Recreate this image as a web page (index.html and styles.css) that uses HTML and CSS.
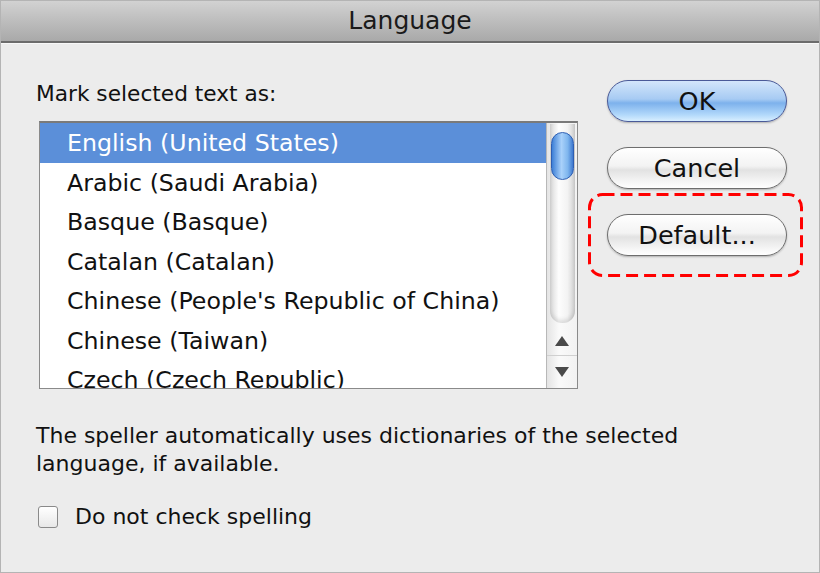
FILE: index.html
```html
<!DOCTYPE html>
<html>
<head>
  <meta charset="utf-8">
  <link rel="stylesheet" href="styles.css">
  <title>Language</title>
</head>
<body>
  <div class="dialog">
    <div class="titlebar">Language</div>
    <div class="main">
      <div class="left">
        <p class="label">Mark selected text as:</p>
        <div class="listbox">
          <ul class="items">
            <li class="selected">English (United States)</li>
            <li>Arabic (Saudi Arabia)</li>
            <li>Basque (Basque)</li>
            <li>Catalan (Catalan)</li>
            <li>Chinese (People's Republic of China)</li>
            <li>Chinese (Taiwan)</li>
            <li>Czech (Czech Republic)</li>
          </ul>
          <div class="scrollbar">
            <div class="track"><div class="thumb"></div></div>
            <div class="arrow up"><span></span></div>
            <div class="arrow down"><span></span></div>
          </div>
        </div>
      </div>
      <div class="buttons">
        <button class="btn ok">OK</button>
        <button class="btn">Cancel</button>
        <div class="highlight">
          <svg class="dashes" width="215" height="84">
            <rect x="1.5" y="1.5" width="212" height="81" rx="13" fill="none" stroke="#f00" stroke-width="3" stroke-dasharray="12 6"/>
          </svg>
          <button class="btn">Default...</button>
        </div>
      </div>
    </div>
    <p class="note">The speller automatically uses dictionaries of the selected<br>language, if available.</p>
    <label class="check"><span class="box"></span>Do not check spelling</label>
  </div>
</body>
</html>
```

FILE: styles.css
```css
body {
  margin:0;
  background:#ececec;
}
.dialog {
  width:820px;
  height:573px;
  box-sizing:border-box;
  border:1px solid #b4b4b4;
  background:#ececec;
  font-family:'DejaVu Sans', sans-serif;
  color:#111;
  overflow:hidden;
}
.titlebar {
  height:40px;
  line-height:40px;
  text-align:center;
  font-size:25px;
  color:#1a1a1a;
  background:linear-gradient(to bottom, #d2d2d2 0%, #bdbdbd 50%, #a9a9a9 100%);
  border-bottom:2px solid #6c6c6c;
  box-shadow:0 1px 0 #f8f8f8;
}
.main {
  display:flex;
  padding:0 0 0 35px;
}
.left {
  width:552px;
}
.label {
  margin:38px 0 0 0;
  font-size:21.7px;
  line-height:26px;
}
.listbox {
  display:flex;
  margin:14px 0 0 3px;
  width:539px;
  height:268px;
  box-sizing:border-box;
  border:1px solid #8a8a8a;
  border-top:2px solid #7a7a7a;
  background:#fff;
  overflow:hidden;
}
.items {
  list-style:none;
  margin:0;
  padding:0;
  flex:1;
  min-width:0;
}
.items li {
  height:39.5px;
  line-height:40px;
  padding-left:27px;
  font-size:23.7px;
  white-space:nowrap;
}
.items li.selected {
  background:#5b8fd9;
  color:#fff;
}
.scrollbar {
  width:30px;
  flex:none;
  border-left:1px solid #b8b8b8;
  background:linear-gradient(to right, #e4e4e4, #fafafa 40%, #f2f2f2);
  display:flex;
  flex-direction:column;
}
.track {
  height:194px;
  margin:1px 2px 0 3px;
  border-radius:0 0 12px 12px;
  background:linear-gradient(to right, #d8d8d8, #fdfdfd 35%, #f3f3f3 70%, #d0d0d0);
  box-shadow:inset 0 -3px 4px rgba(0,0,0,0.12);
  padding-top:8px;
}
.thumb {
  height:46px;
  margin:0 1px;
  border-radius:12px;
  border:1px solid #2e5fb3;
  background:linear-gradient(to right, #3d7fd6, #a9d1fa 45%, #7fb6ee 75%, #3e78cf);
}
.arrow {
  height:33px;
  display:flex;
  align-items:center;
  justify-content:center;
}
.arrow.up {
  border-bottom:1px solid #d0d0d0;
  margin-top:4px;
  height:28px;
}
.arrow span {
  width:0;
  height:0;
  border-left:7px solid transparent;
  border-right:7px solid transparent;
}
.up span {
  border-bottom:10px solid #4a4a4a;
}
.down span {
  border-top:10px solid #4a4a4a;
}
.buttons {
  display:flex;
  flex-direction:column;
  margin-top:37px;
}
.btn {
  width:180px;
  height:42px;
  margin-left:19px;
  border-radius:21px;
  border:1px solid #6e6e6e;
  background:linear-gradient(to bottom, #ffffff 0%, #f3f3f3 45%, #e2e2e2 55%, #f6f6f6 85%, #ffffff 100%);
  box-shadow:0 1px 2px rgba(0,0,0,0.25);
  font-family:'DejaVu Sans', sans-serif;
  font-size:25.5px;
  color:#111;
  padding:0;
}
.btn.ok {
  border-color:#4a5a98;
  background:linear-gradient(to bottom, #d3e6fb 0%, #a7cbf3 45%, #7db1ec 55%, #b3d9fb 85%, #d8efff 100%);
  margin-bottom:25px;
}
.highlight {
  position:relative;
  width:215px;
  height:84px;
  margin-top:4px;
  display:flex;
  align-items:center;
}
.dashes {
  position:absolute;
  left:0;
  top:0;
}
.note {
  margin:33px 0 0 35px;
  font-size:22px;
  line-height:28px;
}
.check {
  display:flex;
  align-items:center;
  margin:26px 0 0 37px;
  font-size:22px;
}
.box {
  width:18px;
  height:20px;
  border:1px solid #8a8a8a;
  border-radius:3px;
  background:linear-gradient(to bottom, #fff, #e8e8e8);
  margin-right:17px;
}
```
